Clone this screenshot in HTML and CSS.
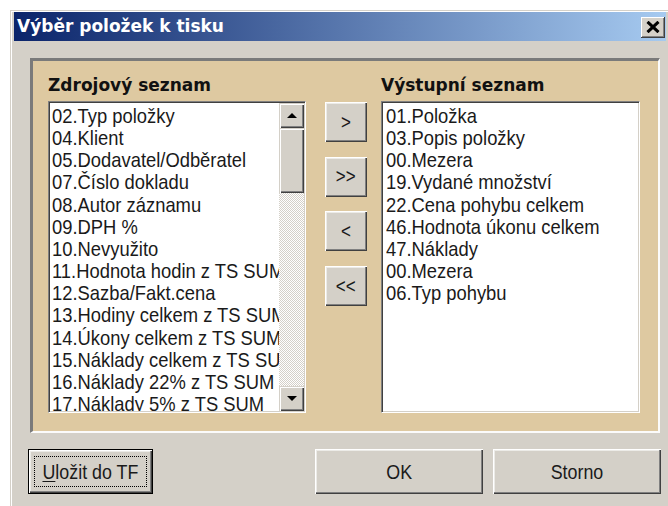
FILE: index.html
```html
<!DOCTYPE html>
<html lang="cs">
<head>
<meta charset="utf-8">
<title>Výběr položek k tisku</title>
<link rel="stylesheet" href="styles.css">
</head>
<body>
<div class="window">
  <div class="titlebar">
    <span class="title">Výběr položek k tisku</span>
    <button class="close" type="button" aria-label="Zavřít">
      <svg width="14" height="12" viewBox="0 0 14 12"><path d="M1.5 0.8 L12.5 11.2 M12.5 0.8 L1.5 11.2" stroke="#000" stroke-width="3" fill="none"/></svg>
    </button>
  </div>
  <div class="client">
    <div class="panel">
      <div class="column">
        <div class="caption">Zdrojový seznam</div>
        <div class="listbox">
          <ul class="items">
            <li>02.Typ položky</li>
            <li>04.Klient</li>
            <li>05.Dodavatel/Odběratel</li>
            <li>07.Číslo dokladu</li>
            <li>08.Autor záznamu</li>
            <li>09.DPH %</li>
            <li>10.Nevyužito</li>
            <li>11.Hodnota hodin z TS SUM</li>
            <li>12.Sazba/Fakt.cena</li>
            <li>13.Hodiny celkem z TS SUM</li>
            <li>14.Úkony celkem z TS SUM</li>
            <li>15.Náklady celkem z TS SUM</li>
            <li>16.Náklady 22% z TS SUM</li>
            <li>17.Náklady 5% z TS SUM</li>
          </ul>
          <div class="scrollbar">
            <div class="sb-btn"><span class="arrow-up"></span></div>
            <div class="sb-thumb"></div>
            <div class="sb-track"></div>
            <div class="sb-btn"><span class="arrow-down"></span></div>
          </div>
        </div>
      </div>
      <div class="movers">
        <button class="btn mover" type="button"><span class="label">&gt;</span></button>
        <button class="btn mover" type="button"><span class="label">&gt;&gt;</span></button>
        <button class="btn mover" type="button"><span class="label">&lt;</span></button>
        <button class="btn mover" type="button"><span class="label">&lt;&lt;</span></button>
      </div>
      <div class="column">
        <div class="caption">Výstupní seznam</div>
        <div class="listbox">
          <ul class="items">
            <li>01.Položka</li>
            <li>03.Popis položky</li>
            <li>00.Mezera</li>
            <li>19.Vydané množství</li>
            <li>22.Cena pohybu celkem</li>
            <li>46.Hodnota úkonu celkem</li>
            <li>47.Náklady</li>
            <li>00.Mezera</li>
            <li>06.Typ pohybu</li>
          </ul>
        </div>
      </div>
    </div>
    <div class="actions">
      <button class="btn default" type="button"><span class="focus"><span class="label"><u>U</u>ložit do TF</span></span></button>
      <button class="btn wide ok" type="button"><span class="label">OK</span></button>
      <button class="btn wide" type="button"><span class="label">Storno</span></button>
    </div>
  </div>
</div>
</body>
</html>
```
FILE: styles.css
```css
html, body {
  margin: 0;
  padding: 0;
  background: #fff;
  overflow: hidden;
}

body {
  width: 668px;
  height: 506px;
}

.window {
  box-sizing: border-box;
  width: 658px;
  height: 496px;
  margin: 10px 0 0 10px;
  padding: 1px 2px 0 3px;
  background: #d4d0c8;
  border-top: 1px solid #d4d0c8;
  border-left: 1px solid #d4d0c8;
  box-shadow: inset 1px 1px 0 #fff;
  display: flex;
  flex-direction: column;
}

/* caption bar */
.titlebar {
  height: 29px;
  display: flex;
  align-items: center;
  padding-left: 3px;
  background: linear-gradient(to right, #0a246a, #a6caf0);
}

.title {
  flex: 1;
  font-family: "DejaVu Sans", sans-serif;
  font-weight: bold;
  font-size: 17px;
  line-height: 29px;
  color: #fff;
  white-space: nowrap;
}

.close {
  width: 24px;
  height: 21px;
  margin: 1px 1px 0 0;
  padding: 0;
  border: 0;
  background: #d4d0c8;
  box-shadow: inset -1px -1px 0 #404040, inset 1px 1px 0 #fff, inset -2px -2px 0 #808080;
  display: flex;
  align-items: center;
  justify-content: center;
}

.client {
  flex: 1;
  display: flex;
  flex-direction: column;
}

/* tan group area */
.panel {
  box-sizing: border-box;
  width: 630px;
  height: 375px;
  margin: 17px 0 0 16px;
  padding: 14px 18px 0 15px;
  background: #dec9a1;
  border-top: 3px solid #7a7a7a;
  border-left: 3px solid #7a7a7a;
  border-right: 2px solid #fbfbfb;
  border-bottom: 2px solid #fbfbfb;
  display: flex;
  align-items: flex-start;
}

.column {
  display: flex;
  flex-direction: column;
}

.caption {
  font-family: "DejaVu Sans", sans-serif;
  font-weight: bold;
  font-size: 17px;
  line-height: 20px;
  color: #111;
  white-space: nowrap;
  margin-bottom: 6px;
}

.listbox {
  box-sizing: border-box;
  width: 258px;
  height: 312px;
  background: #fff;
  border-top: 1px solid #808080;
  border-left: 1px solid #808080;
  border-right: 1px solid #fff;
  border-bottom: 1px solid #fff;
  box-shadow: inset 1px 1px 0 #404040, inset -1px -1px 0 #d4d0c8;
  padding: 1px;
  display: flex;
  overflow: hidden;
}

.column:last-child .listbox {
  width: 259px;
}

/* the dialog font is a narrow sans; Liberation Sans squeezed to its width */
.items {
  flex: 1;
  min-width: 0;
  margin: 0;
  padding: 2px 0 0 2px;
  list-style: none;
  overflow: hidden;
  font-family: "Liberation Sans", Arial, sans-serif;
  font-size: 21px;
  line-height: 22.15px;
  color: #1a1a1a;
}

.items li {
  white-space: nowrap;
  transform: scaleX(0.875);
  transform-origin: 0 0;
}

.column:last-child .items {
  padding-left: 3px;
}

/* vertical scrollbar of the source list */
.scrollbar {
  width: 25px;
  flex: none;
  display: flex;
  flex-direction: column;
}

.sb-btn,
.sb-thumb {
  flex: none;
  background: #d4d0c8;
  box-shadow: inset 1px 1px 0 #d4d0c8, inset 2px 2px 0 #fff, inset -1px -1px 0 #404040, inset -2px -2px 0 #808080;
}

.sb-btn {
  height: 25px;
  display: flex;
  align-items: center;
  justify-content: center;
}

.sb-thumb {
  height: 65px;
}

.sb-track {
  flex: 1;
  background: repeating-conic-gradient(#fff 0 25%, #d4d0c8 0 50%) 0 0 / 2px 2px;
}

.arrow-up,
.arrow-down {
  width: 0;
  height: 0;
  border-left: 5px solid transparent;
  border-right: 5px solid transparent;
}

.arrow-up {
  border-bottom: 5px solid #000;
}

.arrow-down {
  border-top: 5px solid #000;
}

/* push buttons */
.btn {
  box-sizing: border-box;
  padding: 0;
  border: 0;
  background: #d4d0c8;
  box-shadow: inset 1px 1px 0 #fff, inset -1px -1px 0 #404040, inset -2px -2px 0 #808080, inset 2px 2px 0 #ecebe7;
  font-family: "Liberation Sans", Arial, sans-serif;
  font-size: 21px;
  color: #1a1a1a;
  display: flex;
  align-items: center;
  justify-content: center;
  white-space: nowrap;
}

.label {
  display: inline-block;
  transform: scaleX(0.85);
  white-space: nowrap;
}

.movers {
  width: 42px;
  margin: 27px 14px 0 19px;
  display: flex;
  flex-direction: column;
  gap: 14.7px;
}

.mover {
  width: 42px;
  height: 40px;
  font-size: 20px;
}

.actions {
  display: flex;
  margin-top: 16px;
  padding-left: 14px;
}

.btn.default {
  width: 125px;
  height: 45px;
  border: 1px solid #000;
  padding: 6px;
}

.focus {
  flex: 1;
  align-self: stretch;
  display: flex;
  align-items: center;
  justify-content: center;
  outline: 1px dotted #000;
  outline-offset: -1px;
}

.focus u {
  text-decoration-thickness: 1px;
  text-underline-offset: 2px;
}

.btn.wide {
  width: 168px;
  height: 45px;
}

.btn.ok {
  margin-left: 162px;
  margin-right: 10px;
}
```
